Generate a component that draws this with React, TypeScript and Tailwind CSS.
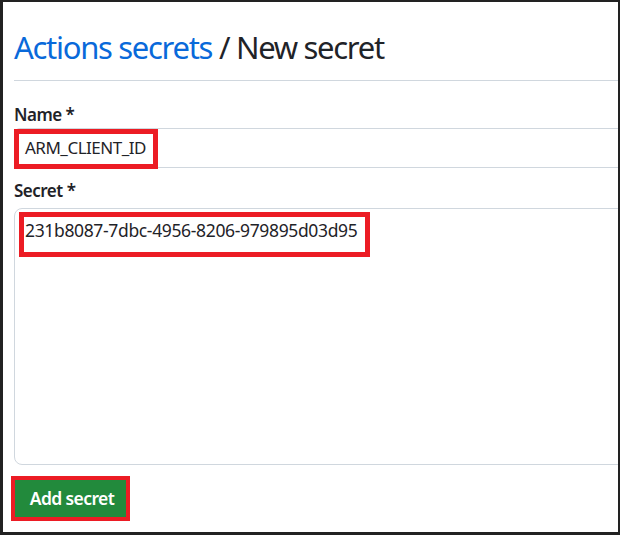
export default function App() {
  const font = { fontFamily: '"Noto Sans", "Open Sans", sans-serif' };

  return (
    <div
      className="w-[620px] h-[535px] overflow-hidden bg-white border-[#222] border-t-2 border-r-2 border-l-[3px] border-b-[3px] text-[#1f2328]"
      style={font}
    >
      <div className="pl-[11px] pt-[25px]">
        <div className="pb-[13px] border-b border-[#d0d7de]">
          <h1 className="text-[31px] leading-[40px] font-normal whitespace-nowrap tracking-[-1.3px]">
            <span className="text-[#0969da]">Actions secrets</span>
            <span> / New secret</span>
          </h1>
        </div>

        <div className="mt-[22px] text-[17px] leading-[24px] font-semibold tracking-[-0.5px]">Name *</div>
        <div className="relative mt-[1px] w-[700px] h-[40px] border border-[#d0d7de] rounded-l-[6px] flex items-center pl-[10px] text-[17px] tracking-[-0.5px]">
          ARM_CLIENT_ID
          <div className="absolute -left-px top-0 w-[144px] h-[40px] border-[5px] border-[#ec1c24]" />
        </div>

        <div className="mt-[11px] text-[17px] leading-[24px] font-semibold tracking-[-0.5px]">Secret *</div>
        <div className="relative mt-[5px] w-[700px] h-[257px] border border-[#d0d7de] rounded-l-[8px] pl-[10px] pt-[9px] text-[17.5px] leading-[24px] tracking-[-0.35px]">
          231b8087-7dbc-4956-8206-979895d03d95
          <div className="absolute left-[4px] top-[3px] w-[351px] h-[45px] border-[5px] border-[#ec1c24]" />
        </div>

        <div className="relative mt-[14px] ml-[1px] w-[111px] h-[38px] bg-[#228a3c] flex items-center justify-center text-white text-[17.5px] font-semibold tracking-[-0.6px]">
          <span className="ml-[3px]">Add secret</span>
          <div className="absolute -left-[4px] -top-[3px] w-[119px] h-[45px] border-[4px] border-[#ec1c24]" />
        </div>
      </div>
    </div>
  );
}
